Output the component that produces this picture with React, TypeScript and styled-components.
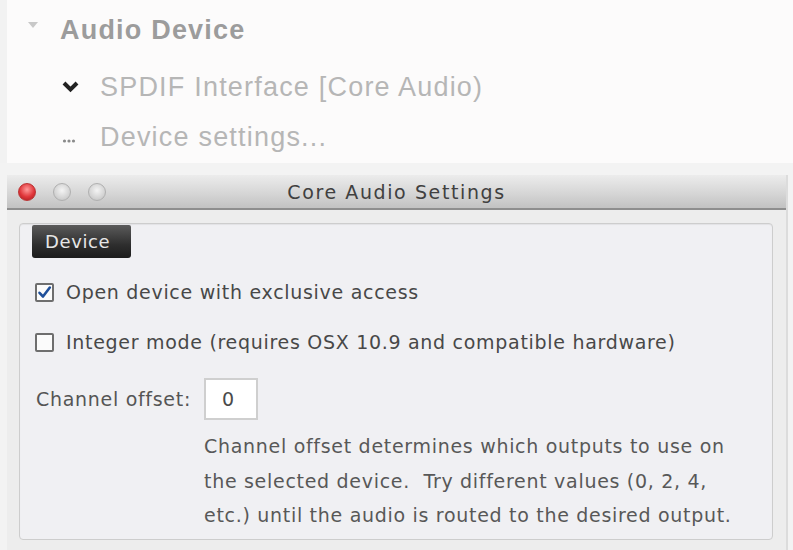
import React from "react";
import styled, { createGlobalStyle } from "styled-components";

const Global = createGlobalStyle`
  html, body { margin: 0; padding: 0; }
  body {
    background: #f3f3f3;
    width: 793px;
    height: 550px;
    overflow: hidden;
  }
`;

const Page = styled.div`
  display: flex;
  flex-direction: column;
  width: 793px;
  height: 550px;
`;

/* ---------- device tree ---------- */

const Tree = styled.div`
  height: 163px;
  background: #fcfbfb;
  border-left: 7px solid #f2f2f2;
  display: flex;
  flex-direction: column;
  padding-top: 5px;
  box-sizing: border-box;
  font-family: "Liberation Sans", Arial, sans-serif;
`;

const TreeRow = styled.div<{ $indent: number; $top: number }>`
  display: flex;
  align-items: center;
  height: 50px;
  margin-top: ${(p) => p.$top}px;
  padding-left: ${(p) => p.$indent}px;
`;

const Marker = styled.span<{ $w: number; $dy?: number }>`
  display: inline-flex;
  align-items: center;
  width: ${(p) => p.$w}px;
  transform: translateY(${(p) => p.$dy ?? 0}px);
`;

const TreeLabel = styled.span<{ $dark?: boolean }>`
  font-size: 27px;
  font-weight: ${(p) => (p.$dark ? 700 : 400)};
  color: ${(p) => (p.$dark ? "#9c9c9c" : "#b6b6b6")};
  letter-spacing: 1.2px;
`;

/* ---------- settings window ---------- */

const Window = styled.div`
  margin: 12px 5px 0 7px;
  flex: 1;
  display: flex;
  flex-direction: column;
  background: #ededed;
  border-right: 2px solid #dcdcdc;
  font-family: "DejaVu Sans", Verdana, sans-serif;
`;

const TitleBar = styled.div`
  height: 35px;
  box-sizing: border-box;
  background: linear-gradient(#ececec, #d6d6d6 55%, #c2c2c2);
  border-bottom: 2px solid #8e8e8e;
  display: grid;
  grid-template-columns: 120px 1fr 120px;
  align-items: center;
`;

const Lights = styled.div`
  display: flex;
  gap: 17px;
  padding-left: 11px;
`;

const Light = styled.span<{ $red?: boolean }>`
  width: 18px;
  height: 18px;
  border-radius: 50%;
  box-sizing: border-box;
  background: ${(p) =>
    p.$red
      ? "radial-gradient(circle at 50% 35%, #ff9a9a, #e0363a 55%, #a51a1e)"
      : "radial-gradient(circle at 50% 40%, #f4f4f4, #d4d4d4 60%, #bdbdbd)"};
  border: 1px solid ${(p) => (p.$red ? "#b33" : "#b0b0b0")};
`;

const Title = styled.div`
  text-align: center;
  font-size: 19px;
  letter-spacing: 1.6px;
  color: #404040;
`;

const Body = styled.div`
  flex: 1;
  padding: 13px 13px 10px 12px;
  display: flex;
`;

const Group = styled.div`
  flex: 1;
  background: #f0f0f3;
  border: 1px solid #cdcdcd;
  border-radius: 4px;
  box-shadow: inset 0 1px 1px rgba(0, 0, 0, 0.06);
  display: flex;
  flex-direction: column;
`;

const Tab = styled.div`
  align-self: flex-start;
  margin: 1px 0 0 12px;
  width: 99px;
  height: 33px;
  box-sizing: border-box;
  padding-left: 13px;
  background: linear-gradient(#5b5b5b, #2e2e2e 60%, #1c1c1c);
  border-radius: 2px 2px 3px 3px;
  color: #e6e6e6;
  font-size: 18px;
  letter-spacing: 0.6px;
  display: flex;
  align-items: center;
`;

const Content = styled.div`
  display: flex;
  flex-direction: column;
  padding-left: 15px;
  font-size: 19px;
  letter-spacing: 0.7px;
`;

const CheckRow = styled.label<{ $top: number }>`
  display: flex;
  align-items: center;
  gap: 12px;
  margin-top: ${(p) => p.$top}px;
  color: #484848;
`;

const Box = styled.span`
  width: 19px;
  height: 19px;
  box-sizing: border-box;
  border: 2px solid #6e6e6e;
  border-radius: 2px;
  background: #fbfbfb;
  display: inline-flex;
  align-items: center;
  justify-content: center;
`;

const OffsetRow = styled.div`
  display: flex;
  align-items: center;
  margin-top: 25px;
  color: #555;
`;

const OffsetLabel = styled.span`
  width: 168px;
  padding-left: 1px;
`;

const Field = styled.div`
  width: 54px;
  height: 42px;
  box-sizing: border-box;
  border: 2px solid #cfcfcf;
  background: #fff;
  display: flex;
  align-items: center;
  padding-left: 16px;
  color: #4a4a4a;
`;

const Help = styled.p`
  margin: 9px 0 0 169px;
  line-height: 34.5px;
  color: #585858;
`;

function Check({ checked }: { checked?: boolean }) {
  return (
    <Box>
      {checked && (
        <svg width="15" height="15" viewBox="0 0 15 15">
          <path d="M2.5 7.8 L6 11.5 L12.8 2.5" fill="none" stroke="#1f4f9a" strokeWidth="2.6" strokeLinecap="round" strokeLinejoin="round" />
        </svg>
      )}
    </Box>
  );
}

export default function App() {
  return (
    <>
      <Global />
      <Page>
        <Tree>
          <TreeRow $indent={21} $top={0}>
            <Marker $w={32} $dy={-5}>
              <svg width="10" height="6" viewBox="0 0 10 6">
                <path d="M0 0 H10 L5 6 Z" fill="#c8c8c8" />
              </svg>
            </Marker>
            <TreeLabel $dark>Audio Device</TreeLabel>
          </TreeRow>
          <TreeRow $indent={55} $top={7}>
            <Marker $w={38}>
              <svg width="17" height="12" viewBox="0 0 17 12">
                <path d="M2 2 L8.5 8.5 L15 2" fill="none" stroke="#222" strokeWidth="4" strokeLinejoin="miter" />
              </svg>
            </Marker>
            <TreeLabel>SPDIF Interface [Core Audio)</TreeLabel>
          </TreeRow>
          <TreeRow $indent={55} $top={0}>
            <Marker $w={38} $dy={4}>
              <svg width="14" height="6" viewBox="0 0 14 6">
                <circle cx="2.5" cy="3" r="1.6" fill="#8a8a8a" />
                <circle cx="7" cy="3" r="1.6" fill="#8a8a8a" />
                <circle cx="11.5" cy="3" r="1.6" fill="#8a8a8a" />
              </svg>
            </Marker>
            <TreeLabel>Device settings...</TreeLabel>
          </TreeRow>
        </Tree>

        <Window>
          <TitleBar>
            <Lights>
              <Light $red />
              <Light />
              <Light />
            </Lights>
            <Title>Core Audio Settings</Title>
            <span />
          </TitleBar>
          <Body>
            <Group>
              <Tab>Device</Tab>
              <Content>
                <CheckRow $top={23}>
                  <Check checked />
                  Open device with exclusive access
                </CheckRow>
                <CheckRow $top={28}>
                  <Check />
                  Integer mode (requires OSX 10.9 and compatible hardware)
                </CheckRow>
                <OffsetRow>
                  <OffsetLabel>Channel offset:</OffsetLabel>
                  <Field>0</Field>
                </OffsetRow>
                <Help>
                  Channel offset determines which outputs to use on
                  <br />
                  the selected device.&nbsp; Try different values (0, 2, 4,
                  <br />
                  etc.) until the audio is routed to the desired output.
                </Help>
              </Content>
            </Group>
          </Body>
        </Window>
      </Page>
    </>
  );
}
